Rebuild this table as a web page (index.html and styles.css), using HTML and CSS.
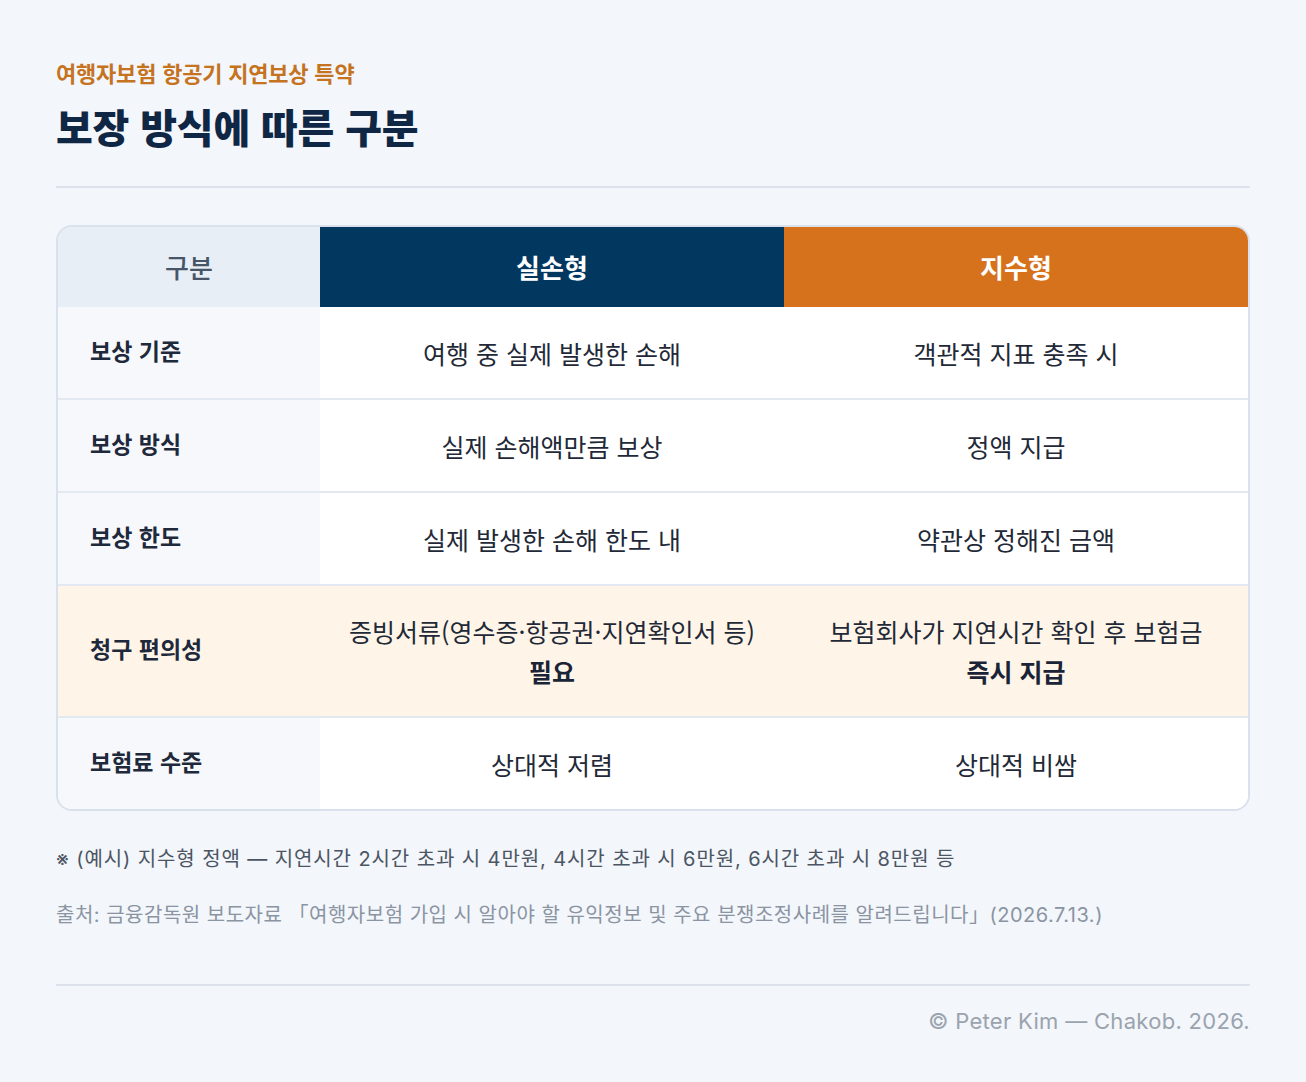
FILE: index.html
```html
<!DOCTYPE html>
<html lang="ko">
<head>
<meta charset="utf-8">
<title>보장 방식에 따른 구분</title>
<link rel="stylesheet" href="styles.css">
</head>
<body>
<main class="page">
  <header class="head">
    <p class="eyebrow">여행자보험 항공기 지연보상 특약</p>
    <h1 class="title">보장 방식에 따른 구분</h1>
  </header>
  <hr class="rule">
  <div class="card">
    <div class="grid">
      <div class="cell th th-label">구분</div>
      <div class="cell th th-navy">실손형</div>
      <div class="cell th th-orange">지수형</div>

      <div class="cell label">보상 기준</div>
      <div class="cell val">여행 중 실제 발생한 손해</div>
      <div class="cell val">객관적 지표 충족 시</div>

      <div class="cell label">보상 방식</div>
      <div class="cell val">실제 손해액만큼 보상</div>
      <div class="cell val">정액 지급</div>

      <div class="cell label">보상 한도</div>
      <div class="cell val">실제 발생한 손해 한도 내</div>
      <div class="cell val">약관상 정해진 금액</div>

      <div class="cell label hl tall">청구 편의성</div>
      <div class="cell val hl tall"><span>증빙서류(영수증·항공권·지연확인서 등)<br><strong>필요</strong></span></div>
      <div class="cell val hl tall"><span>보험회사가 지연시간 확인 후 보험금<br><strong>즉시 지급</strong></span></div>

      <div class="cell label last">보험료 수준</div>
      <div class="cell val last">상대적 저렴</div>
      <div class="cell val last">상대적 비쌈</div>
    </div>
  </div>
  <p class="note">※ (예시) 지수형 정액 — 지연시간 2시간 초과 시 4만원, 4시간 초과 시 6만원, 6시간 초과 시 8만원 등</p>
  <p class="source">출처: 금융감독원 보도자료 「여행자보험 가입 시 알아야 할 유익정보 및 주요 분쟁조정사례를 알려드립니다」(2026.7.13.)</p>
  <hr class="rule rule-bottom">
  <p class="copy">© Peter Kim — Chakob. 2026.</p>
</main>
</body>
</html>
```

FILE: styles.css
```css
* { box-sizing: border-box; }
html, body { margin: 0; padding: 0; }
body {
  background: #f3f6fa;
  font-family: "Noto Sans CJK KR", "Noto Sans", sans-serif;
  color: #1e293b;
}
.page {
  padding: 56px 56px 0 56px;
}
.head { margin: 0; }
.eyebrow {
  margin: 0;
  font-size: 22px;
  line-height: 32px;
  font-weight: 700;
  color: #c5731f;
  letter-spacing: -0.2px;
}
.title {
  margin: 12px 0 0 0;
  font-size: 40px;
  line-height: 52px;
  font-weight: 800;
  color: #0f2744;
  letter-spacing: -0.2px;
}
.rule {
  border: 0;
  height: 2px;
  background: #dbe2ec;
  margin: 34px 0 0 0;
}
.card {
  margin-top: 37px;
  border: 2px solid #d9e1ec;
  border-radius: 16px;
  overflow: hidden;
  background: #ffffff;
}
.grid {
  display: grid;
  grid-template-columns: 262px 1fr 1fr;
}
.cell {
  display: flex;
  align-items: center;
  justify-content: center;
  text-align: center;
  height: 93px;
  border-bottom: 2px solid #e3e9f1;
  font-size: 25px;
  line-height: 40px;
  color: #1f2937;
}
.th {
  height: 80px;
  border-bottom: 0;
  font-size: 26px;
  font-weight: 700;
  color: #ffffff;
}
.th-label {
  background: #e8eef5;
  color: #475569;
  font-weight: 500;
}
.th-navy { background: #02375f; }
.th-orange { background: #d6711c; }
.label {
  justify-content: flex-start;
  padding-left: 32px;
  background: #f6f8fb;
  font-size: 23px;
  font-weight: 700;
  color: #1e293b;
  padding-bottom: 6px;
}
.val {
  background: #ffffff;
  padding-top: 0;
}
.val strong { font-weight: 700; color: #1a2436; }
.hl { background: #fef5e8; }
.tall { height: 132px; }
.label.hl { background: #fef5e8; }
.last { border-bottom: 0; height: 91px; }
.note {
  margin: 34px 0 0 0;
  font-family: "Inter", "Noto Sans CJK KR", sans-serif;
  font-size: 20px;
  line-height: 28px;
  color: #4b5563;
  letter-spacing: 0.9px;
}
.source {
  margin: 28px 0 0 0;
  font-family: "Inter", "Noto Sans CJK KR", sans-serif;
  font-size: 20px;
  line-height: 28px;
  color: #8a94a3;
  letter-spacing: 0.5px;
}
.rule-bottom { margin-top: 55px; }
.copy {
  margin: 20px 0 0 0;
  text-align: right;
  font-family: "Inter", "Noto Sans", sans-serif;
  font-size: 22px;
  line-height: 30px;
  color: #9aa3ae;
  letter-spacing: 0.3px;
}
```
